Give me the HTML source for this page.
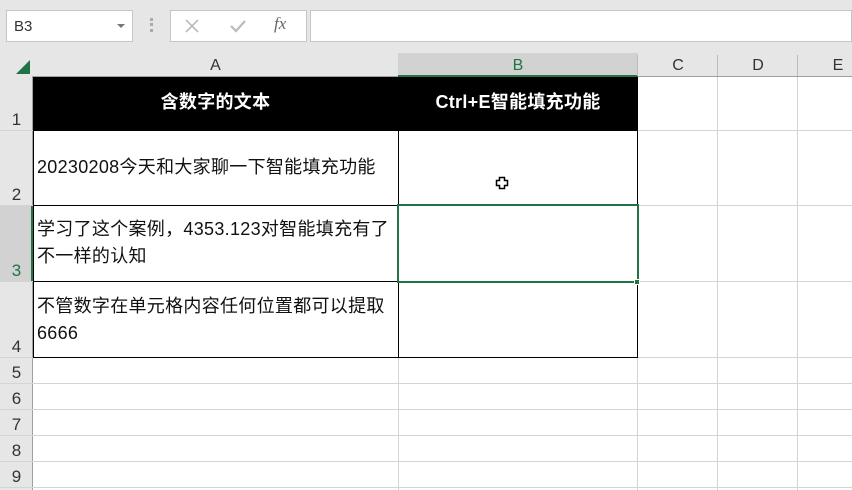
<!DOCTYPE html><html><head><meta charset="utf-8"><style>
*{margin:0;padding:0;box-sizing:border-box}
html,body{width:852px;height:490px;overflow:hidden}
body{background:#fff;font-family:"Liberation Sans","Noto Sans CJK SC",sans-serif;position:relative}
.a{position:absolute}
.t{font-size:18px;letter-spacing:0.3px;color:#111;white-space:nowrap;line-height:27px}
.hl{position:absolute;height:1px;background:#d4d4d4;left:0;width:852px}
.vl{position:absolute;width:1px;background:#d4d4d4;top:77px;height:413px}
.rn{position:absolute;left:0;width:33px;font-size:17px;color:#333;text-align:center}
.cn{position:absolute;top:53px;height:23px;font-size:16px;color:#333;text-align:center;line-height:26px}
</style></head><body>
<div class="a" style="left:0;top:0;width:852px;height:53px;background:#e6e6e6"></div>
<div class="a" style="left:6px;top:10px;width:127px;height:32px;background:#fff;border:1px solid #c6c6c6;font-size:15px;color:#333;padding:7px 7px">B3</div>
<div class="a" style="left:117px;top:24px;width:0;height:0;border-left:4px solid transparent;border-right:4px solid transparent;border-top:4px solid #777"></div>
<div class="a" style="left:150px;top:18px;width:3px;height:14px;border-left:3px dotted #aaa"></div>
<div class="a" style="left:170px;top:10px;width:137px;height:32px;background:#fff;border:1px solid #c6c6c6"></div>
<svg class="a" style="left:184px;top:18px" width="16" height="16"><path d="M2 2L14 14M14 2L2 14" stroke="#bbb" stroke-width="1.6"/></svg>
<svg class="a" style="left:229px;top:18px" width="18" height="16"><path d="M2 8L7 13L16 3" stroke="#bbb" stroke-width="2.2" fill="none"/></svg>
<div class="a" style="left:274px;top:14px;font-size:17px;color:#666;font-style:italic;font-family:'Liberation Serif',serif">fx</div>
<div class="a" style="left:310px;top:10px;width:542px;height:32px;background:#fff;border:1px solid #c6c6c6"></div>
<!-- headers -->
<div class="a" style="left:0;top:53px;width:852px;height:24px;background:#e6e6e6;border-bottom:1px solid #a0a0a0"></div>
<div class="a" style="left:0;top:76px;width:33px;height:414px;background:#e6e6e6;border-right:1px solid #a0a0a0"></div>
<div class="a" style="left:398px;top:53px;width:240px;height:24px;background:#d2d2d2;border-bottom:2px solid #217346"></div>
<div class="a" style="left:0;top:206px;width:33px;height:76px;background:#d2d2d2;border-right:2px solid #217346"></div>
<div class="a" style="left:16px;top:60px;width:0;height:0;border-left:14px solid transparent;border-bottom:14px solid #217346"></div>
<div class="cn" style="left:33px;width:365px">A</div>
<div class="cn" style="left:398px;width:240px;color:#217346">B</div>
<div class="cn" style="left:638px;width:80px">C</div>
<div class="cn" style="left:718px;width:80px">D</div>
<div class="cn" style="left:798px;width:80px">E</div>
<div class="a" style="left:637px;top:55px;width:1px;height:21px;background:#bbb"></div>
<div class="a" style="left:717px;top:55px;width:1px;height:21px;background:#bbb"></div>
<div class="a" style="left:797px;top:55px;width:1px;height:21px;background:#bbb"></div>
<!-- grid -->
<div class="vl" style="left:637px"></div><div class="vl" style="left:717px"></div><div class="vl" style="left:797px"></div>
<div class="vl" style="left:398px;top:357px;height:133px"></div>
<div class="hl" style="top:130px"></div><div class="hl" style="top:205px"></div><div class="hl" style="top:281px"></div><div class="hl" style="top:357px"></div>
<div class="hl" style="top:383px"></div><div class="hl" style="top:409px"></div><div class="hl" style="top:435px"></div><div class="hl" style="top:461px"></div><div class="hl" style="top:487px"></div>
<!-- table -->
<div class="a" style="left:33px;top:77px;width:605px;height:54px;background:#000"></div>
<div class="a" style="left:33px;top:130px;width:605px;height:228px;border:1px solid #000;border-top:none"></div>
<div class="a" style="left:398px;top:130px;width:1px;height:227px;background:#000"></div>
<div class="a" style="left:33px;top:205px;width:605px;height:1px;background:#000"></div>
<div class="a" style="left:33px;top:281px;width:605px;height:1px;background:#000"></div>
<div class="a t" style="left:33px;top:89px;width:365px;text-align:center;color:#fff;font-weight:bold">含数字的文本</div>
<div class="a t" style="left:398px;top:89px;width:240px;text-align:center;color:#fff;font-weight:bold">Ctrl+E智能填充功能</div>
<div class="a t" style="left:37px;top:154px">20230208今天和大家聊一下智能填充功能</div>
<div class="a t" style="left:37px;top:216px">学习了这个案例，4353.123对智能填充有了<br>不一样的认知</div>
<div class="a t" style="left:37px;top:293px">不管数字在单元格内容任何位置都可以提取<br>6666</div>
<!-- selection -->
<div class="a" style="left:397px;top:204px;width:242px;height:79px;border:2px solid #217346"></div>
<div class="a" style="left:634px;top:279px;width:6px;height:6px;background:#217346;border:1px solid #fff"></div>
<svg class="a" style="left:495px;top:176px" width="15" height="15"><path d="M4.5 1.5H9.5V4.5H12.5V9.5H9.5V12.5H4.5V9.5H1.5V4.5H4.5Z" fill="#fff" stroke="#000" stroke-width="1.5"/></svg>
<!-- row numbers -->
<div class="rn" style="top:110px">1</div>
<div class="rn" style="top:185px">2</div>
<div class="rn" style="top:261px;color:#217346">3</div>
<div class="rn" style="top:337px">4</div>
<div class="rn" style="top:363px">5</div>
<div class="rn" style="top:389px">6</div>
<div class="rn" style="top:415px">7</div>
<div class="rn" style="top:441px">8</div>
<div class="rn" style="top:467px">9</div>
</body></html>
